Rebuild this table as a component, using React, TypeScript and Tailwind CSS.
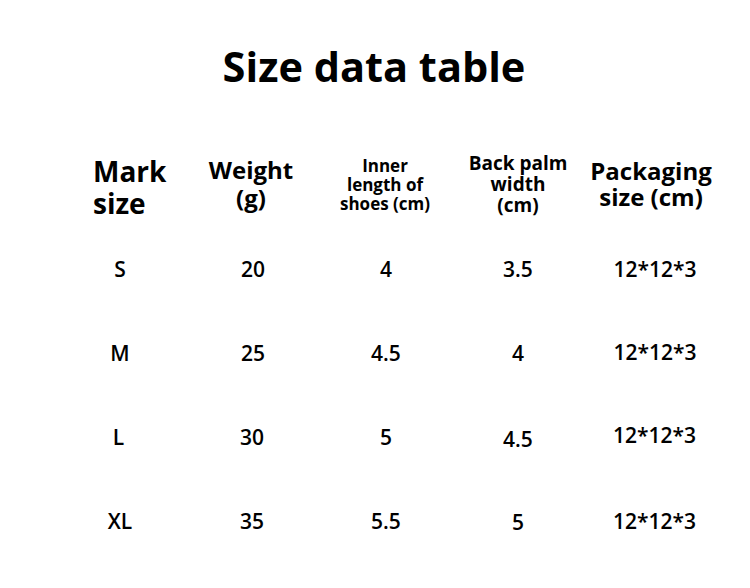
import React from "react";

type Cell = { t: string; c?: string };

const rows: Cell[][] = [
  [{ t: "S" }, { t: "20" }, { t: "4" }, { t: "3.5" }, { t: "12*12*3" }],
  [{ t: "M" }, { t: "25" }, { t: "4.5" }, { t: "4" }, { t: "12*12*3", c: "-mt-[2px]" }],
  [
    { t: "L", c: "-ml-[3px]" },
    { t: "30", c: "-ml-[2px]" },
    { t: "5" },
    { t: "4.5", c: "mt-[3px]" },
    { t: "12*12*3", c: "-mt-[4px] -ml-[1px]" },
  ],
  [{ t: "XL" }, { t: "35", c: "-ml-[2px]" }, { t: "5.5" }, { t: "5", c: "mt-[2px]" }, { t: "12*12*3", c: "-ml-[1px]" }],
];

function Lines({ lines, cls }: { lines: string[]; cls: string }) {
  return (
    <div className={cls}>
      {lines.map((l, i) => (
        <div key={i}>{l}</div>
      ))}
    </div>
  );
}

export default function App() {
  return (
    <div
      className="w-[750px] h-[588px] bg-white text-black overflow-hidden"
      style={{ fontFamily: '"Open Sans", "Noto Sans", sans-serif' }}
    >
      <div className="pt-[40px] flex justify-center">
        <h1 className="text-[41.5px] leading-[52px] font-bold -ml-[2px]">Size data table</h1>
      </div>
      <div className="mt-[50px] pl-[53px]">
        <div className="grid grid-cols-[134px_132px_134px_130px_144px] h-[84px] items-center font-bold">
          <Lines lines={["Mark", "size"]} cls="pl-[40px] pt-[6px] text-[28px] leading-[32px]" />
          <Lines lines={["Weight", "(g)"]} cls="text-center text-[24px] leading-[28px] -ml-[4px]" />
          <Lines
            lines={["Inner", "length of", "shoes (cm)"]}
            cls="text-center text-[17px] leading-[19px] -ml-[2px]"
          />
          <Lines lines={["Back palm", "width", "(cm)"]} cls="text-center text-[19px] leading-[21px]" />
          <Lines lines={["Packaging", "size (cm)"]} cls="text-center text-[24px] leading-[26px] -ml-[8px]" />
        </div>
        {rows.map((r, i) => (
          <div
            key={i}
            className="grid grid-cols-[134px_132px_134px_130px_144px] h-[84px] items-center text-center text-[21px] font-semibold pt-[4px]"
          >
            {r.map((c, j) => (
              <div key={j} className={c.c}>
                {c.t}
              </div>
            ))}
          </div>
        ))}
      </div>
    </div>
  );
}
